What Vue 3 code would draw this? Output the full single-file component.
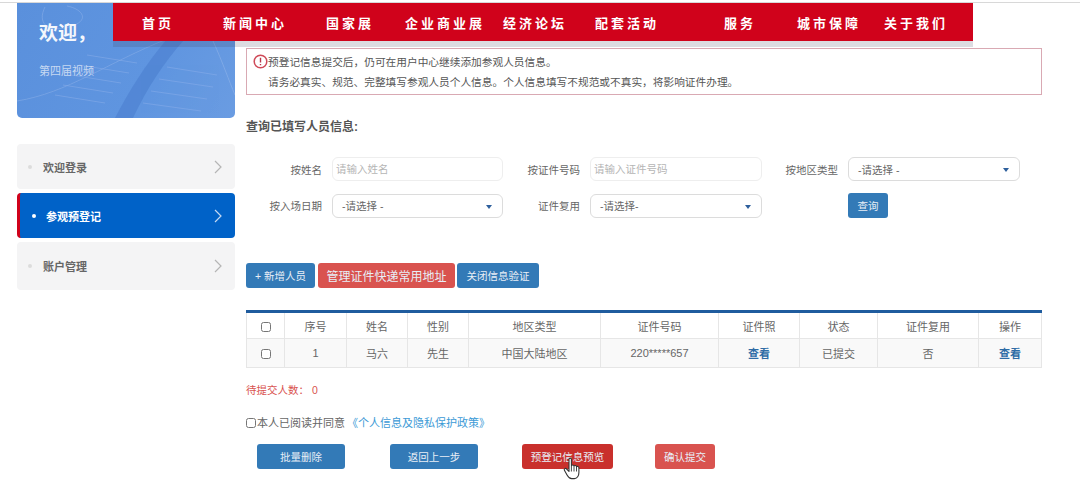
<template>
  <div class="page">
    <div class="topline"></div>

    <nav class="nav">
      <a v-for="item in navItems" :key="item" class="nav-item">{{ item }}</a>
    </nav>

    <div class="content">
      <aside class="side">
        <div class="hero">
          <svg class="hero-art" viewBox="0 0 218 115" preserveAspectRatio="none">
            <path d="M150 36 C128 62 112 88 98 115 L116 115 C130 86 146 60 168 36 Z" fill="#4b7fce" opacity="0.6" />
            <path d="M0 98 C50 90 90 60 150 36" stroke="#8db2ea" fill="none" opacity="0.5" />
            <path d="M28 4 C20 20 30 30 52 24 C74 18 66 6 50 3" stroke="#8db2ea" fill="none" opacity="0.5" />
            <path d="M70 52 L120 60 M62 62 L112 70 M54 72 L104 80 M46 82 L96 90 M38 92 L88 100" stroke="#88adea" opacity="0.55" />
            <path d="M150 64 L200 72 M142 76 L196 84 M134 88 L190 96 M126 100 L184 108" stroke="#88adea" opacity="0.55" />
            <path d="M196 38 C206 60 212 78 218 92" stroke="#8db2ea" fill="none" opacity="0.6" />
          </svg>
          <div class="hero-title">欢迎，</div>
          <div class="hero-sub">第四届视频</div>
        </div>

        <ul class="menu">
          <li v-for="item in menuItems" :key="item.label" class="menu-item" :class="{ active: item.active }">
            <span class="menu-dot"></span>
            <span class="menu-label">{{ item.label }}</span>
            <svg class="menu-arrow" width="8" height="14" viewBox="0 0 8 14">
              <path d="M1 1 L7 7 L1 13" fill="none" stroke="currentColor" stroke-width="1.2" />
            </svg>
          </li>
        </ul>
      </aside>

      <main class="main">
        <div class="notice">
          <div class="notice-line">
            <svg class="notice-icon" width="15" height="15" viewBox="0 0 15 15">
              <circle cx="7.5" cy="7.5" r="6.3" fill="#fff" stroke="#cf4a58" stroke-width="1.5" />
              <path d="M7.5 3.8 V8.6 M7.5 10 V11.3" stroke="#b8384a" stroke-width="1.4" />
            </svg>
            预登记信息提交后，仍可在用户中心继续添加参观人员信息。
          </div>
          <div class="notice-line second">请务必真实、规范、完整填写参观人员个人信息。个人信息填写不规范或不真实，将影响证件办理。</div>
        </div>

        <h3 class="query-title">查询已填写人员信息:</h3>

        <div class="form">
          <label class="form-label">按姓名</label>
          <input class="field" placeholder="请输入姓名" />
          <label class="form-label">按证件号码</label>
          <input class="field" placeholder="请输入证件号码" />
          <label class="form-label">按地区类型</label>
          <div class="field select">-请选择 -<i class="caret"></i></div>

          <label class="form-label">按入场日期</label>
          <div class="field select">-请选择 -<i class="caret"></i></div>
          <label class="form-label">证件复用</label>
          <div class="field select">-请选择-<i class="caret"></i></div>
          <span></span>
          <div><button class="btn blue query-btn">查询</button></div>
        </div>

        <div class="actions">
          <button class="btn blue add-btn">+ 新增人员</button>
          <button class="btn red addr-btn">管理证件快递常用地址</button>
          <button class="btn blue verify-btn">关闭信息验证</button>
        </div>

        <table class="table">
          <colgroup>
            <col v-for="(w, i) in colWidths" :key="i" :style="{ width: w + 'px' }" />
          </colgroup>
          <thead>
            <tr>
              <th><input type="checkbox" class="check" /></th>
              <th v-for="h in headers" :key="h">{{ h }}</th>
            </tr>
          </thead>
          <tbody>
            <tr>
              <td><input type="checkbox" class="check" /></td>
              <td>1</td>
              <td>马六</td>
              <td>先生</td>
              <td>中国大陆地区</td>
              <td>220*****657</td>
              <td><a class="link">查看</a></td>
              <td>已提交</td>
              <td>否</td>
              <td><a class="link">查看</a></td>
            </tr>
          </tbody>
        </table>

        <p class="pending">待提交人数： 0</p>

        <p class="consent">
          <input type="checkbox" class="check consent-check" />本人已阅读并同意
          <a class="policy">《个人信息及隐私保护政策》</a>
        </p>

        <div class="footer-btns">
          <button class="btn blue foot delete">批量删除</button>
          <button class="btn blue foot back">返回上一步</button>
          <button class="btn dark-red foot preview">
            预登记信息预览
            <svg class="cursor" width="19" height="23" viewBox="0 0 19 23">
              <path d="M6 2.2 C6 .8 8.4 .8 8.4 2.2 V8.6 C9 7.8 10.8 7.8 11 9 C11.6 8.2 13.4 8.4 13.5 9.7 C14.2 9.1 15.8 9.4 15.9 10.8 V15.5 C15.9 18.6 14.2 21.6 11.4 21.6 H8.6 C6.4 21.6 5.2 20 4.2 18.2 L1.4 13.2 C.7 11.9 2.6 10.7 3.6 12 L6 14.4 Z" fill="#fff" stroke="#333" stroke-width="1.1" stroke-linejoin="round" />
              <path d="M8.4 9 V14.5 M11 9.2 V14.5 M13.5 10 V14.5" stroke="#333" stroke-width="0.9" fill="none" />
            </svg>
          </button>
          <button class="btn red foot confirm">确认提交</button>
        </div>
      </main>
    </div>
  </div>
</template>

<script setup>
const navItems = ['首页', '新闻中心', '国家展', '企业商业展', '经济论坛', '配套活动', '服务', '城市保障', '关于我们']

const menuItems = [
  { label: '欢迎登录' },
  { label: '参观预登记', active: true },
  { label: '账户管理' }
]

const headers = ['序号', '姓名', '性别', '地区类型', '证件号码', '证件照', '状态', '证件复用', '操作']
const colWidths = [38, 62, 61, 61, 132, 118, 81, 78, 101, 63]
</script>

<style>
html,
body {
  background: #fff;
  overflow: hidden;
}
</style>

<style scoped>
.page {
  position: relative;
  width: 1080px;
  height: 496px;
  overflow: hidden;
  font-family: "Liberation Sans", "Noto Sans CJK SC", sans-serif;
  font-size: 11px;
  color: #666;
  background: #fff;
}

.topline {
  height: 2px;
  border-bottom: 1px solid #d8d8d8;
}

/* 紅色導航疊在藍色區塊上 */
.nav {
  position: absolute;
  top: 3px;
  left: 113px;
  width: 860px;
  height: 38px;
  display: grid;
  grid-template-columns: 90px 104px 86px 104px 76px 108px 118px 60px 114px;
  align-items: center;
  justify-items: center;
  background: #d0021b;
  box-shadow: 0 6px 0 rgba(60, 60, 90, 0.18);
  z-index: 2;
}

.nav-item {
  color: #fff;
  font-size: 13px;
  font-weight: 700;
  letter-spacing: 3px;
  white-space: nowrap;
}

.content {
  display: flex;
  padding-left: 17px;
}

.side {
  width: 218px;
  flex: none;
}

.hero {
  position: relative;
  height: 115px;
  padding: 19px 22px 0;
  box-sizing: border-box;
  border-radius: 0 0 5px 5px;
  background: linear-gradient(120deg, #5a90dc, #5f95e0 60%, #6a9ce2);
  overflow: hidden;
}

.hero-art {
  position: absolute;
  inset: 0;
  width: 100%;
  height: 100%;
}

.hero-title {
  position: relative;
  color: #f4f7fc;
  font-size: 19px;
  font-weight: 700;
  line-height: 24px;
}

.hero-sub {
  position: relative;
  margin-top: 15px;
  color: #c6d8f2;
  font-size: 11px;
  line-height: 20px;
}

.menu {
  list-style: none;
  margin: 26px 0 0;
  padding: 0;
  display: flex;
  flex-direction: column;
  gap: 4px;
}

.menu-item {
  display: flex;
  align-items: center;
  height: 45px;
  padding: 0 13px 0 11px;
  border-radius: 4px;
  background: #f4f4f5;
  color: #666;
  font-size: 11px;
  font-weight: 700;
}

.menu-item:last-child {
  height: 48px;
}

.menu-dot {
  width: 4px;
  height: 4px;
  border-radius: 50%;
  background: #dcdcdc;
  margin-right: 11px;
}

.menu-label {
  flex: 1;
}

.menu-arrow {
  color: #b5b5b5;
}

.menu-item.active {
  background: #0062c8;
  border-left: 3px solid #d0021b;
  padding-left: 12px;
  color: #fff;
}

.menu-item.active .menu-dot {
  background: #fff;
  margin-right: 10px;
}

.menu-item.active .menu-arrow {
  color: #c5d9f2;
}

.main {
  width: 796px;
  margin-left: 11px;
}

.notice {
  box-sizing: border-box;
  height: 47px;
  margin-top: 45px;
  padding: 2px 0 0 6px;
  border: 1px solid #d9a9b3;
  color: #555;
  font-size: 10.7px;
}

.notice-line {
  display: flex;
  align-items: center;
  height: 20px;
}

.notice-line.second {
  padding-left: 15px;
}

.notice-icon {
  margin-right: 0;
  flex: none;
}

.query-title {
  margin: 23px 0 0;
  color: #555;
  font-size: 12px;
  font-weight: 700;
  line-height: 18px;
}

.form {
  display: grid;
  grid-template-columns: 76px 171px 67px 172px 66px 172px;
  column-gap: 10px;
  row-gap: 12px;
  margin-top: 21px;
  align-items: center;
}

.form-label {
  text-align: right;
  color: #666;
  font-size: 10.5px;
  white-space: nowrap;
}

.field {
  box-sizing: border-box;
  width: 100%;
  height: 24px;
  padding: 0 3px;
  border: 1px solid #eeeeee;
  border-radius: 6px;
  outline: none;
  font-family: inherit;
  font-size: 10.5px;
  color: #666;
  background: #fff;
}

.field::placeholder {
  color: #b5b5b5;
}

.select {
  position: relative;
  display: flex;
  align-items: center;
  padding-left: 9px;
  border-color: #dcdcdc;
}

.caret {
  position: absolute;
  right: 10px;
  top: 10px;
  border-left: 3.5px solid transparent;
  border-right: 3.5px solid transparent;
  border-top: 4px solid #2d5f9c;
}

.btn {
  box-sizing: border-box;
  height: 25px;
  padding: 0;
  border: none;
  border-radius: 3px;
  font-family: inherit;
  font-size: 10.5px;
  color: #e8eef6;
}

.blue {
  background: #337ab7;
}

.red {
  background: #d9534f;
}

.dark-red {
  background: #c9302c;
}

.query-btn {
  display: block;
  width: 40px;
}

.actions {
  display: flex;
  gap: 3px;
  margin-top: 45px;
}

.add-btn {
  width: 69px;
}

.addr-btn {
  width: 137px;
  font-size: 12px;
}

.verify-btn {
  width: 82px;
  margin-left: -1px;
}

.table {
  width: 796px;
  margin-top: 22px;
  border-collapse: collapse;
  table-layout: fixed;
  border-top: 3px solid #1f5c9e;
  font-size: 11px;
  color: #666;
}

.table th,
.table td {
  padding: 0;
  border: 1px solid #e6e6e6;
  text-align: center;
  font-weight: 400;
}

.table thead tr {
  height: 27px;
}

.table tbody tr {
  height: 29px;
  background: #f9f9f9;
}

.check {
  width: 10px;
  height: 10px;
  margin: 0;
  vertical-align: middle;
}

.link {
  color: #2f6ca6;
  font-weight: 700;
}

.pending {
  margin: 14px 0 0;
  color: #d9534f;
  font-size: 10.5px;
  line-height: 16px;
}

.consent {
  display: flex;
  align-items: center;
  margin: 17px 0 0;
  color: #666;
  font-size: 11px;
  line-height: 16px;
}

.consent-check {
  margin-right: 1px;
}

.policy {
  margin-left: 2px;
  color: #3c9ad6;
}

.footer-btns {
  display: flex;
  margin-top: 13px;
  padding-left: 11px;
}

.foot {
  position: relative;
  width: 88px;
}

.back {
  margin-left: 45px;
}

.preview {
  width: 91px;
  margin-left: 44px;
}

.confirm {
  width: 60px;
  margin-left: 42px;
}

/* 滑鼠游標蓋在按鈕上 */
.cursor {
  position: absolute;
  left: 41px;
  top: 13px;
}
</style>
